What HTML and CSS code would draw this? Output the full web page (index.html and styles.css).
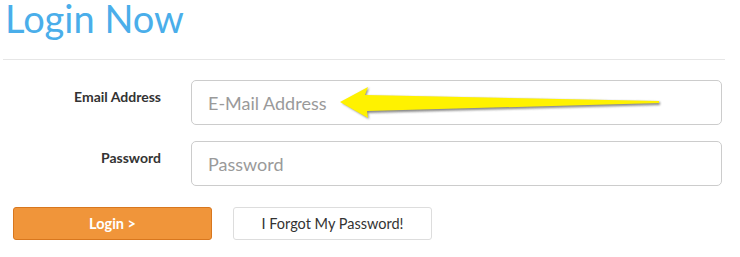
FILE: index.html
```html
<!DOCTYPE html>
<html>
<head>
<meta charset="utf-8">
<link rel="stylesheet" href="styles.css">
</head>
<body>
<div class="page">
  <h1 class="title">Login Now</h1>
  <div class="divider"></div>
  <form class="form">
    <div class="row">
      <label class="label">Email Address</label>
      <input class="field" type="text" placeholder="E-Mail Address">
    </div>
    <div class="row">
      <label class="label">Password</label>
      <input class="field" type="password" placeholder="Password">
    </div>
    <div class="actions">
      <button type="button" class="btn btn-login">Login &gt;</button>
      <button type="button" class="btn btn-forgot">I Forgot My Password!</button>
    </div>
  </form>
  <svg class="arrow" width="740" height="257" viewBox="0 0 740 257">
    <defs>
      <filter id="blur" x="-10%" y="-50%" width="120%" height="200%">
        <feGaussianBlur stdDeviation="1"/>
      </filter>
    </defs>
    <polygon points="342,103 369,88 366,96 660,102 660,105 368,113 369,119" fill="#6b6b6b" opacity="0.8" filter="url(#blur)"/>
    <polygon points="340,102 368,87 365,95 659,101 659,103 367,111 368,118" fill="#fff200"/>
  </svg>
</div>
</body>
</html>
```
FILE: styles.css
```css
html, body {
  margin: 0;
  padding: 0;
  background: #fff;
}
body {
  font-family: "Lato", "Open Sans", sans-serif;
}
.page {
  position: relative;
  width: 740px;
  height: 257px;
  overflow: hidden;
}
.title {
  margin: 0;
  padding: 0 0 0 5px;
  font-size: 38px;
  line-height: 36px;
  font-weight: 400;
  color: #4aaeea;
}
.divider {
  margin: 23px 15px 0 3px;
  height: 1px;
  background: #e6e6e6;
}
.form {
  margin: 20px 0 0 0;
  display: flex;
  flex-direction: column;
  gap: 16px;
}
.row {
  display: grid;
  grid-template-columns: 161px 531px;
  column-gap: 30px;
  align-items: start;
}
.label {
  text-align: right;
  font-size: 14px;
  font-weight: 700;
  color: #333;
  padding-top: 8px;
}
.field {
  box-sizing: border-box;
  width: 531px;
  height: 45px;
  border: 1px solid #cccccc;
  border-radius: 5px;
  padding: 0 16px;
  font-family: "Lato", "Open Sans", sans-serif;
  font-size: 18px;
  color: #333;
  background: #fff;
  outline: none;
}
.field::placeholder {
  color: #9a9a9a;
}
.actions {
  display: flex;
  gap: 21px;
  margin: 5px 0 0 13px;
}
.btn {
  box-sizing: border-box;
  width: 199px;
  height: 33px;
  border-radius: 3px;
  font-family: "Lato", "Open Sans", sans-serif;
  font-size: 14.5px;
  cursor: pointer;
}
.btn-login {
  background: #f0953a;
  border: 1px solid #d8771e;
  color: #fff;
  font-weight: 700;
}
.btn-forgot {
  background: #fff;
  border: 1px solid #dddddd;
  color: #333;
}
.arrow {
  position: absolute;
  left: 0;
  top: 0;
  pointer-events: none;
}
```
